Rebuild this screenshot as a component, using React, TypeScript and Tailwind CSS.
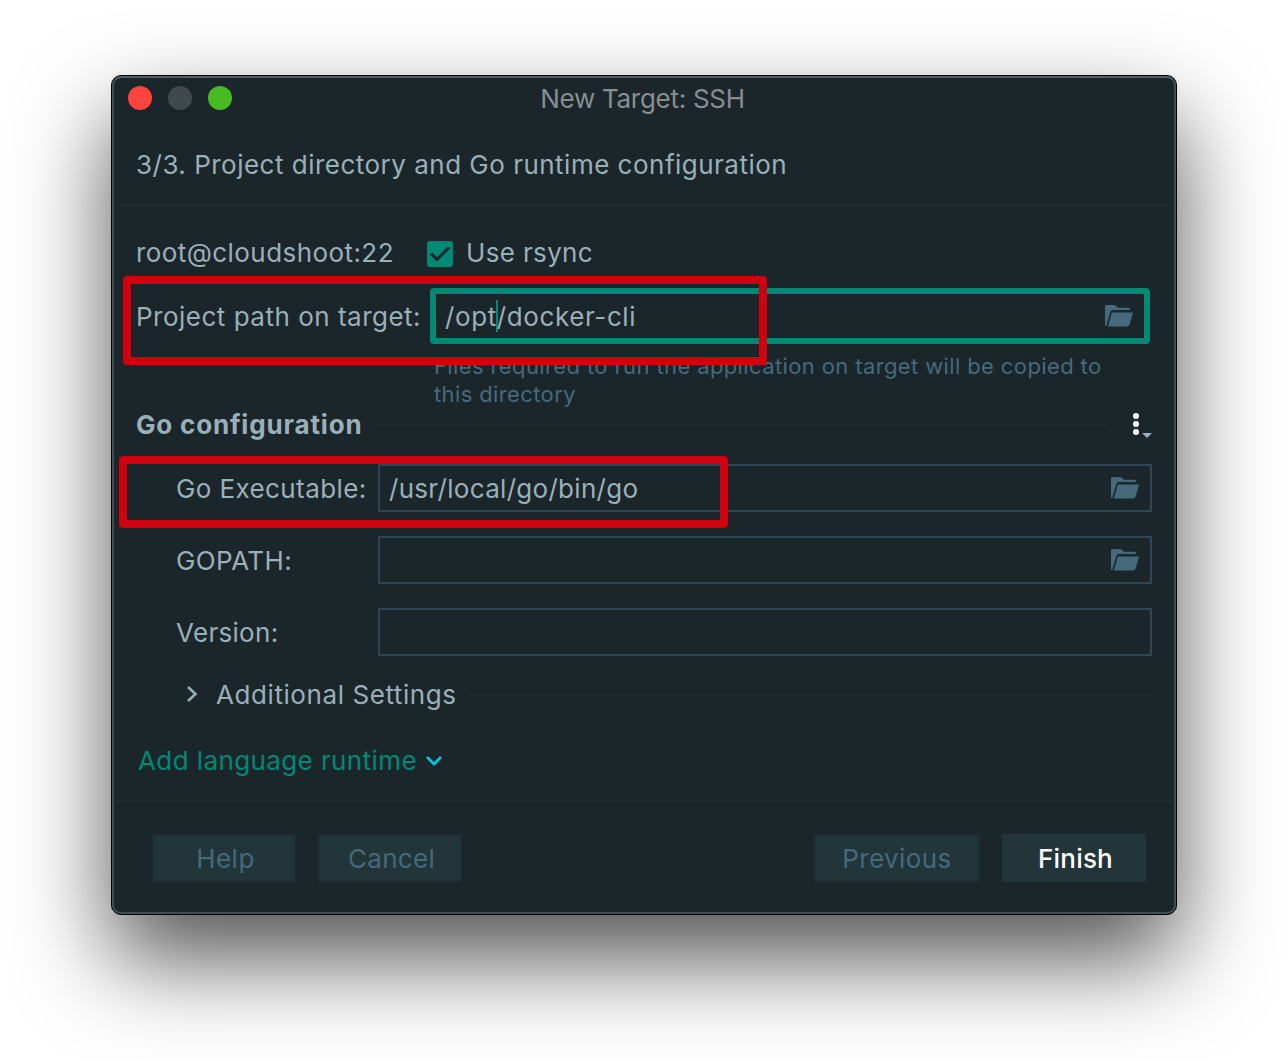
import React from "react";

function FolderIcon({ className = "" }: { className?: string }) {
  return (
    <svg className={className} width="30" height="24" viewBox="0 0 30 24" fill="#466a7c">
      <path d="M1 21.5V2.8Q1 1 2.8 1H10q1 0 1.7.7L14 3.800h10.6q1.6 0 1.6 1.8V6H8.600Q7 6 6.400 7.700L2.700 20.500V22.300Q1 22.300 1 21.500Z" />
      <path d="M7.800 8.400H29L25.600 20.600Q25.100 22.400 23.400 22.400H4Z" />
    </svg>
  );
}

function Highlight({ className }: { className: string }) {
  return <div className={`pointer-events-none absolute z-10 rounded-[4px] border-8 border-[#d2000f] ${className}`} />;
}

function Field({ label, value, folder, children }: { label: React.ReactNode; value?: React.ReactNode; folder?: boolean; children?: React.ReactNode }) {
  return (
    <div className="relative flex h-12 items-center pl-10">
      <div className="w-[202px] shrink-0 pt-[2px]">{label}</div>
      <div className="flex h-12 grow items-center justify-between border-2 border-[#2e4655] pr-[10px] pl-[9px]">
        <span className="pt-[2px]">{value}</span>
        {folder && <FolderIcon />}
      </div>
      {children}
    </div>
  );
}

export default function App() {
  return (
    <div className="h-[1062px] w-[1288px] overflow-hidden bg-white pt-[75px] pl-[111px] font-['Inter'] text-[26px] leading-8 whitespace-nowrap text-[#9ab0b8]">
      <div className="h-[840px] w-[1066px] rounded-[10px] border border-black bg-[#1b262b] shadow-[0_44px_94px_rgba(0,0,0,0.68)]">
        <div className="flex h-full flex-col rounded-[9px] border-2 border-[#424d52] border-t-[#526064]">
          <div className="relative flex h-10 shrink-0 items-center justify-center text-[#888e90]">
            <div className="absolute left-[14px] flex gap-4">
              <span className="size-6 rounded-full bg-[#ff443f]" />
              <span className="size-6 rounded-full bg-[#40494e]" />
              <span className="size-6 rounded-full bg-[#48bb24]" />
            </div>
            <h1 className="pt-[2px] pr-[3px] tracking-[-0.28px]">New Target: SSH</h1>
          </div>

          <div className="flex h-[88px] shrink-0 items-center border-b-2 border-[#1e2b30] pt-[7px] pl-[22px]">
            <h2 className="tracking-[0.49px]">3/3. Project directory and Go runtime configuration</h2>
          </div>

          <main className="flex h-[594px] shrink-0 flex-col pt-6 pr-[22px] pl-[22px]">
            <div className="flex h-12 items-center">
              <span className="w-[291px] pb-[2px] tracking-[0.43px]">root@cloudshoot:22</span>
              <svg width="26" height="26" viewBox="0 0 26 26">
                <rect width="26" height="26" rx="3" fill="#008975" />
                <path d="M4 12.500L10 18.500L22 6.500" fill="none" stroke="#1b262b" strokeWidth="3" />
              </svg>
              <span className="pb-[2px] pl-[13px] tracking-[0.35px]">Use rsync</span>
            </div>

            <div className="relative mt-[10px] flex h-14 items-center">
              <span className="w-[294px] shrink-0 pt-[2px] tracking-[0.5px]">Project path on target:</span>
              <div className="mr-[2px] flex h-14 grow items-center justify-between rounded-[4px] border-[6px] border-[#008975] pr-[10px] pl-[9px]">
                <div className="flex items-center tracking-[0.6px]">
                  <span className="pt-[2px]">/opt</span>
                  <span className="-mx-px h-8 w-[2px] bg-[#008975]" />
                  <span className="pt-[2px]">/docker-cli</span>
                </div>
                <FolderIcon />
              </div>
              <Highlight className="-top-3 -left-[13px] h-[89px] w-[644px]" />
            </div>

            <p className="mt-2 ml-[298px] h-14 text-[22px] leading-7 tracking-[0.38px] text-[#466a7c]">
              Files required to run the application on target will be copied to
              <br />
              this directory
            </p>

            <div className="flex h-8 items-center">
              <h3 className="pt-[2px] font-bold tracking-[0.82px]">Go configuration</h3>
              <div className="mt-[2px] ml-[14px] h-[2px] w-[732px] bg-[#1e2b30]" />
              <svg className="ml-auto" width="22" height="28" viewBox="0 0 22 28">
                <g fill="#fff">
                  <circle cx="6" cy="6" r="3" />
                  <circle cx="6" cy="14" r="3" />
                  <circle cx="6" cy="22" r="3" />
                </g>
                <path d="M12 23H22L17 28Z" fill="#9ab0b8" />
              </svg>
            </div>

            <div className="mt-6 flex flex-col gap-6">
              <Field label={<span className="tracking-[0.4px]">Go Executable:</span>} value={<span className="tracking-[0.3px]">/usr/local/go/bin/go</span>} folder>
                <Highlight className="-top-2 -left-[17px] h-[72px] w-[609px]" />
              </Field>
              <Field label={<span className="tracking-[0.4px]">GOPATH:</span>} folder />
              <Field label={<span className="tracking-[0.3px]">Version:</span>} />
            </div>

            <div className="mt-[23px] flex h-8 items-center pl-[50px]">
              <svg className="mb-[2px]" width="13" height="18" viewBox="0 0 13 18" fill="none" stroke="#9ab0b8" strokeWidth="2.600">
                <path d="M2 2L9.500 9L2 16" />
              </svg>
              <span className="ml-[17px] tracking-[0.58px]">Additional Settings</span>
              <div className="ml-3 h-[2px] grow bg-[#1e2b30]" />
            </div>

            <div className="mt-[34px] flex h-8 items-center pl-[2px] text-[#008975]">
              <span className="tracking-[0.4px]">Add language runtime</span>
              <svg className="mb-px ml-2" width="18" height="12" viewBox="0 0 18 12" fill="none" stroke="#00c8e0" strokeWidth="2.800">
                <path d="M2 2L9 9L16 2" />
              </svg>
            </div>
          </main>

          <footer className="flex grow items-start border-t-2 border-[#1e2b30] pt-8 pr-7 pl-[38px] text-[#466a7c]">
            <button className="h-12 w-36 border-2 border-[#202e33] bg-[#223539] pt-[2px] pl-[3px] tracking-[0.5px]">Help</button>
            <button className="ml-[22px] h-12 w-36 border-2 border-[#202e33] bg-[#223539] pt-[2px] pl-[3px] tracking-[0.3px]">Cancel</button>
            <button className="ml-auto h-12 w-[166px] border-2 border-[#202e33] bg-[#223539] pt-[2px] tracking-[0.4px]">Previous</button>
            <button className="ml-[22px] h-12 w-36 bg-[#223539] pt-[2px] pl-[3px] font-medium tracking-[0.2px] text-white">Finish</button>
          </footer>
        </div>
      </div>
    </div>
  );
}
